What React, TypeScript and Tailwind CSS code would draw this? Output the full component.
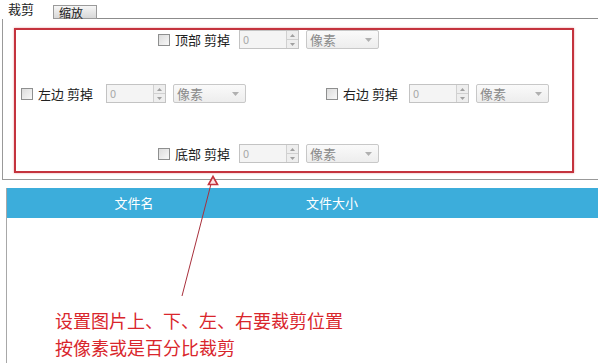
import React from "react";

function Spin() {
  return (
    <div className="flex h-[19px] w-[60px] border border-[#c3c3c3] bg-[#f4f4f4]">
      <div className="flex-1 pl-[3px] text-[11px] leading-[16px] text-[#a8a8a8]">0</div>
      <div className="flex w-[12px] flex-col border-l border-[#d0d0d0]">
        <div className="flex flex-1 items-center justify-center border-b border-[#d0d0d0] bg-[#eeeeee]">
          <svg width="5" height="3" viewBox="0 0 5 3"><path d="M0 3 L2.5 0 L5 3 Z" fill="#a0a0a0" /></svg>
        </div>
        <div className="flex flex-1 items-center justify-center bg-[#eeeeee]">
          <svg width="5" height="3" viewBox="0 0 5 3"><path d="M0 0 L2.5 3 L5 0 Z" fill="#a0a0a0" /></svg>
        </div>
      </div>
    </div>
  );
}

function Sel() {
  return (
    <div className="flex h-[19px] w-[73px] items-center rounded-[2px] border border-[#c8c8c8] bg-gradient-to-b from-[#fafafa] to-[#ededed] pl-[3px] pr-[6px]">
      <span className="flex-1 text-[13px] leading-[17px] text-[#8a8a8a]">像素</span>
      <svg width="7" height="4" viewBox="0 0 7 4"><path d="M0 0 L3.5 4 L7 0 Z" fill="#b0b0b0" /></svg>
    </div>
  );
}

function Row({ label, wide }: { label: string; wide: "a" | "b" | "c" }) {
  const lw = wide === "a" ? "w-[69px]" : wide === "b" ? "w-[73px]" : "w-[71px]";
  return (
    <div className="flex h-[19px] items-center">
      <div className="h-[12px] w-[12px] border border-[#8e8f8f] bg-gradient-to-br from-[#dcdcdc] to-[#f8f8f8]" />
      <div className={`${lw} pl-[5px] text-[13px] leading-[16px] text-[#222]`}>{label}</div>
      <Spin />
      <div className="w-[7px]" />
      <Sel />
    </div>
  );
}

export default function App() {
  return (
    <div
      className="relative h-[363px] w-[598px] overflow-hidden bg-white"
      style={{ fontFamily: '"Noto Sans CJK SC", "Noto Sans", sans-serif' }}
    >
      {/* tabs */}
      <div className="flex h-[19px] items-end">
        <div className="w-[53px] self-stretch pl-[8px] text-[13px] leading-[18px] text-[#222]">裁剪</div>
        <div className="h-[14px] w-[44px] border border-[#9a9a9a] bg-gradient-to-b from-[#f6f6f6] to-[#d8d8d8] pl-[5px] text-[12px] leading-[13px] text-[#222]">
          缩放
        </div>
        <div className="flex-1 border-b border-[#8c8c8c]" />
      </div>

      {/* crop panel */}
      <div className="ml-[2px] border-b border-l border-[#999] pb-[6px] pl-[11px] pr-[24px] pt-[9px]">
        <div className="border-2 border-[#c4333d] pb-[8px] pt-[0px] shadow-[0_0_2px_rgba(210,60,70,0.5)]">
          <div className="ml-[142px]">
            <Row label="顶部 剪掉" wide="a" />
          </div>
          <div className="mt-[35px] flex pl-[5px]">
            <Row label="左边 剪掉" wide="b" />
            <div className="ml-[80px]">
              <Row label="右边 剪掉" wide="c" />
            </div>
          </div>
          <div className="ml-[142px] mt-[41px]">
            <Row label="底部 剪掉" wide="a" />
          </div>
        </div>
      </div>

      {/* file list */}
      <div className="ml-[6px] mt-[8px] h-[200px] border-l border-[#a8a8a8]">
        <div className="flex h-[30px] items-center bg-[#3caddb] text-[13px] text-white">
          <div className="w-[254px] text-center">文件名</div>
          <div className="w-[142px] text-center">文件大小</div>
        </div>
        <div className="pl-[48px] pt-[89px] text-[18px] leading-[27px] text-[#d9262c]">
          <div>设置图片上、下、左、右要裁剪位置</div>
          <div>按像素或是百分比裁剪</div>
        </div>
      </div>

      {/* arrow annotation */}
      <svg className="pointer-events-none absolute left-0 top-0" width="598" height="363">
        <line x1="182" y1="296" x2="211" y2="184" stroke="#a8303c" strokeWidth="1" />
        <path d="M213 176.5 L217.5 184.5 L208.5 184.5 Z" fill="#fbe3e5" stroke="#c4333d" strokeWidth="1.6" />
      </svg>
    </div>
  );
}
